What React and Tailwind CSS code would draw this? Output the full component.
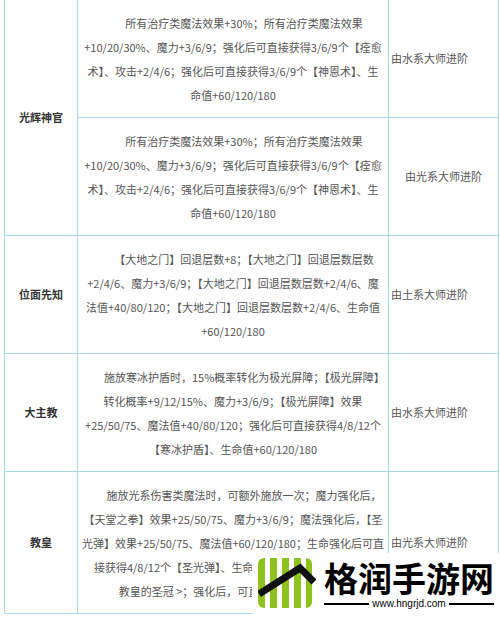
const border = "border border-[#a9dbe6]";

const rows = [
  {
    name: "光辉神官",
    span: 2,
    lines: [
      "所有治疗类魔法效果+30%；所有治疗类魔法效果",
      "+10/20/30%、魔力+3/6/9；强化后可直接获得3/6/9个【痊愈",
      "术】、攻击+2/4/6；强化后可直接获得3/6/9个【神恩术】、生",
      "命值+60/120/180",
    ],
    from: "由水系大师进阶",
  },
  {
    lines: [
      "所有治疗类魔法效果+30%；所有治疗类魔法效果",
      "+10/20/30%、魔力+3/6/9；强化后可直接获得3/6/9个【痊愈",
      "术】、攻击+2/4/6；强化后可直接获得3/6/9个【神恩术】、生",
      "命值+60/120/180",
    ],
    from: "由光系大师进阶",
    center: true,
  },
  {
    name: "位面先知",
    span: 1,
    lines: [
      "【大地之门】回退层数+8；【大地之门】回退层数层数",
      "+2/4/6、魔力+3/6/9；【大地之门】回退层数层数+2/4/6、魔",
      "法值+40/80/120；【大地之门】回退层数层数+2/4/6、生命值",
      "+60/120/180",
    ],
    from: "由土系大师进阶",
  },
  {
    name: "大主教",
    span: 1,
    lines: [
      "施放寒冰护盾时，15%概率转化为极光屏障；【极光屏障】",
      "转化概率+9/12/15%、魔力+3/6/9；【极光屏障】效果",
      "+25/50/75、魔法值+40/80/120；强化后可直接获得4/8/12个",
      "【寒冰护盾】、生命值+60/120/180",
    ],
    from: "由水系大师进阶",
  },
  {
    name: "教皇",
    span: 1,
    lines: [
      "施放光系伤害类魔法时，可额外施放一次；魔力强化后，",
      "【天堂之拳】效果+25/50/75、魔力+3/6/9；魔法强化后，【圣",
      "光弹】效果+25/50/75、魔法值+60/120/180；生命强化后可直",
      "接获得4/8/12个【圣光弹】、生命值+60/120/180；解锁＜",
      "教皇的圣冠 >；强化后，可直接获得教皇的圣冠",
    ],
    from: "由光系大师进阶",
  },
];

function Logo() {
  return (
    <svg width="58" height="52" viewBox="0 0 58 52">
      <defs>
        <clipPath id="box">
          <rect x="0" y="0" width="54" height="50" rx="6" />
        </clipPath>
      </defs>
      <g clipPath="url(#box)" fill="#8dc21f">
        <rect x="0" y="0" width="7" height="50" />
        <rect x="12" y="0" width="7" height="50" />
        <rect x="24" y="0" width="7" height="50" />
        <rect x="36" y="0" width="7" height="50" />
        <rect x="48" y="0" width="7" height="50" />
      </g>
      <polyline
        points="1,36 42,10 56,24"
        fill="none"
        stroke="#111"
        strokeWidth="7"
        strokeLinejoin="miter"
      />
    </svg>
  );
}

export default function App() {
  return (
    <div
      className="relative w-[500px] h-[617px] overflow-hidden bg-white"
      style={{ fontFamily: '"Noto Sans CJK SC", "Noto Sans", sans-serif' }}
    >
      <table className="ml-[4px] mt-[-1px] w-[495px] table-fixed border-collapse text-[11px] text-[#555]">
        <colgroup>
          <col className="w-[73px]" />
          <col className="w-[311px]" />
          <col />
        </colgroup>
        <tbody>
          {rows.map((r, i) => (
            <tr key={i}>
              {r.name && (
                <td rowSpan={r.span} className={`${border} text-center align-middle font-bold text-[#333]`}>
                  {r.name}
                </td>
              )}
              <td className={`${border} px-[4px] py-[10.5px] text-center leading-[24px] indent-[2em] whitespace-nowrap`}>
                {r.lines.map((l, j) => (
                  <span key={j}>
                    {l}
                    {j < r.lines.length - 1 && <br />}
                  </span>
                ))}
              </td>
              <td className={`${border} px-[2px] align-middle whitespace-nowrap ${r.center ? "text-center" : "text-left"}`}>
                {r.from}
              </td>
            </tr>
          ))}
        </tbody>
      </table>

      {/* watermark */}
      <div className="absolute left-[252px] top-[553px] w-[248px] h-[64px] bg-white flex items-start gap-[8px] pl-[6px] pt-[5px]">
        <Logo />
        <div className="flex flex-col items-center">
          <div className="text-[34px] leading-[40px] font-bold text-black">格润手游网</div>
          <div className="flex items-center gap-[3px] mt-[1px]">
            <div className="w-[45px] h-[2px] bg-black" />
            <div className="text-[10px] leading-[10px] text-black" style={{ fontFamily: '"Liberation Sans", sans-serif' }}>
              www.hngrjd.com
            </div>
            <div className="w-[45px] h-[2px] bg-black" />
          </div>
        </div>
      </div>
    </div>
  );
}
